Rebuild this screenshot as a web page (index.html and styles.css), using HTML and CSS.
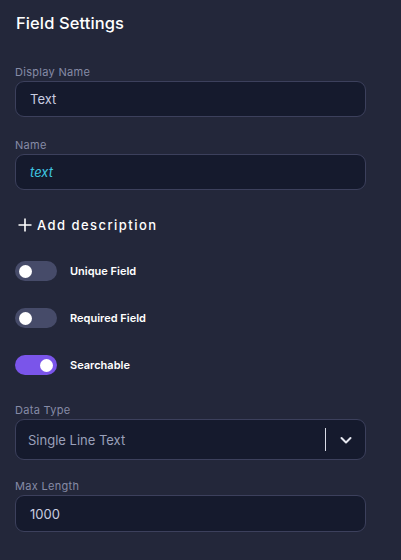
FILE: index.html
```html
<!DOCTYPE html>
<html>
<head>
<meta charset="utf-8">
<link rel="stylesheet" href="styles.css">
</head>
<body>
<div class="panel">
  <h1 class="title">Field Settings</h1>

  <div class="field">
    <label class="label">Display Name</label>
    <div class="input">Text</div>
  </div>

  <div class="field">
    <label class="label">Name</label>
    <div class="input input-code">text</div>
  </div>

  <div class="add-desc">
    <svg width="14" height="14" viewBox="0 0 14 14"><path d="M7 0.5V13.5M0.5 7H13.5" stroke="#fff" stroke-width="1.6"/></svg>
    <span>Add description</span>
  </div>

  <div class="toggles">
    <div class="toggle-row"><span class="toggle"><span class="knob"></span></span><span class="toggle-label">Unique Field</span></div>
    <div class="toggle-row"><span class="toggle"><span class="knob"></span></span><span class="toggle-label">Required Field</span></div>
    <div class="toggle-row"><span class="toggle on"><span class="knob"></span></span><span class="toggle-label">Searchable</span></div>
  </div>

  <div class="field">
    <label class="label">Data Type</label>
    <div class="select">
      <span class="select-value">Single Line Text</span>
      <span class="sep"></span>
      <svg class="chev" width="14" height="14" viewBox="0 0 14 14"><path d="M2.5 5L7 9.5L11.5 5" fill="none" stroke="#e6e8f0" stroke-width="2" stroke-linecap="round" stroke-linejoin="round"/></svg>
    </div>
  </div>

  <div class="field">
    <label class="label">Max Length</label>
    <div class="input input-tall">1000</div>
  </div>
</div>
</body>
</html>
```

FILE: styles.css
```css
* { box-sizing: border-box; }
html, body { margin: 0; padding: 0; }
body {
  background: #23273a;
  width: 401px;
  height: 560px;
  overflow: hidden;
  font-family: Inter, "Open Sans", sans-serif;
  color: #fff;
}
.panel {
  padding: 11px 35px 0 15px;
  display: flex;
  flex-direction: column;
}
.title {
  margin: 0 0 0 1px;
  font-size: 16.5px;
  font-weight: 500;
  line-height: 24px;
  color: #fff;
  letter-spacing: 0.1px;
}
.field {
  display: flex;
  flex-direction: column;
}
.panel > .field:nth-of-type(1) { margin-top: 29px; }
.label {
  font-size: 11px;
  color: #868ba6;
  line-height: 16px;
  margin-bottom: 1px;
  letter-spacing: 0.3px;
}
.input {
  height: 36px;
  border: 1px solid #3c405c;
  border-radius: 9px;
  background: #151a2d;
  padding: 0 14px;
  display: flex;
  align-items: center;
  font-size: 13px;
  color: #c9cde0;
  margin-bottom: 20px;
}
.input-tall { height: 37px; }
.input-code {
  color: #3ec6e0;
  font-style: italic;
}
.add-desc {
  display: flex;
  align-items: center;
  gap: 5px;
  margin: 4px 0 0 3px;
  height: 22px;
  font-size: 13px;
  font-weight: 500;
  letter-spacing: 1.45px;
  color: #fff;
}
.toggles {
  display: flex;
  flex-direction: column;
  gap: 27px;
  margin-top: 25px;
  margin-bottom: 27px;
}
.toggle-row {
  display: flex;
  align-items: center;
  gap: 13px;
  height: 20px;
}
.toggle {
  width: 42px;
  height: 20px;
  border-radius: 10px;
  background: #464b69;
  display: flex;
  align-items: center;
  padding: 0 4px;
}
.toggle .knob {
  width: 13px;
  height: 13px;
  border-radius: 50%;
  background: #fff;
}
.toggle.on {
  background: #7a55ea;
  justify-content: flex-end;
}
.toggle-label {
  font-size: 11px;
  font-weight: 600;
  color: #fff;
}
.select {
  height: 41px;
  border: 1px solid #3c405c;
  border-radius: 9px;
  background: #151a2d;
  display: flex;
  align-items: center;
  padding: 0 12px 0 12px;
  margin-bottom: 18px;
}
.select-value {
  flex: 1;
  font-size: 13px;
  color: #9aa0ba;
}
.sep {
  width: 1px;
  height: 23px;
  background: #d8dbe6;
  margin-right: 13px;
}
.chev { display: block; }
```
